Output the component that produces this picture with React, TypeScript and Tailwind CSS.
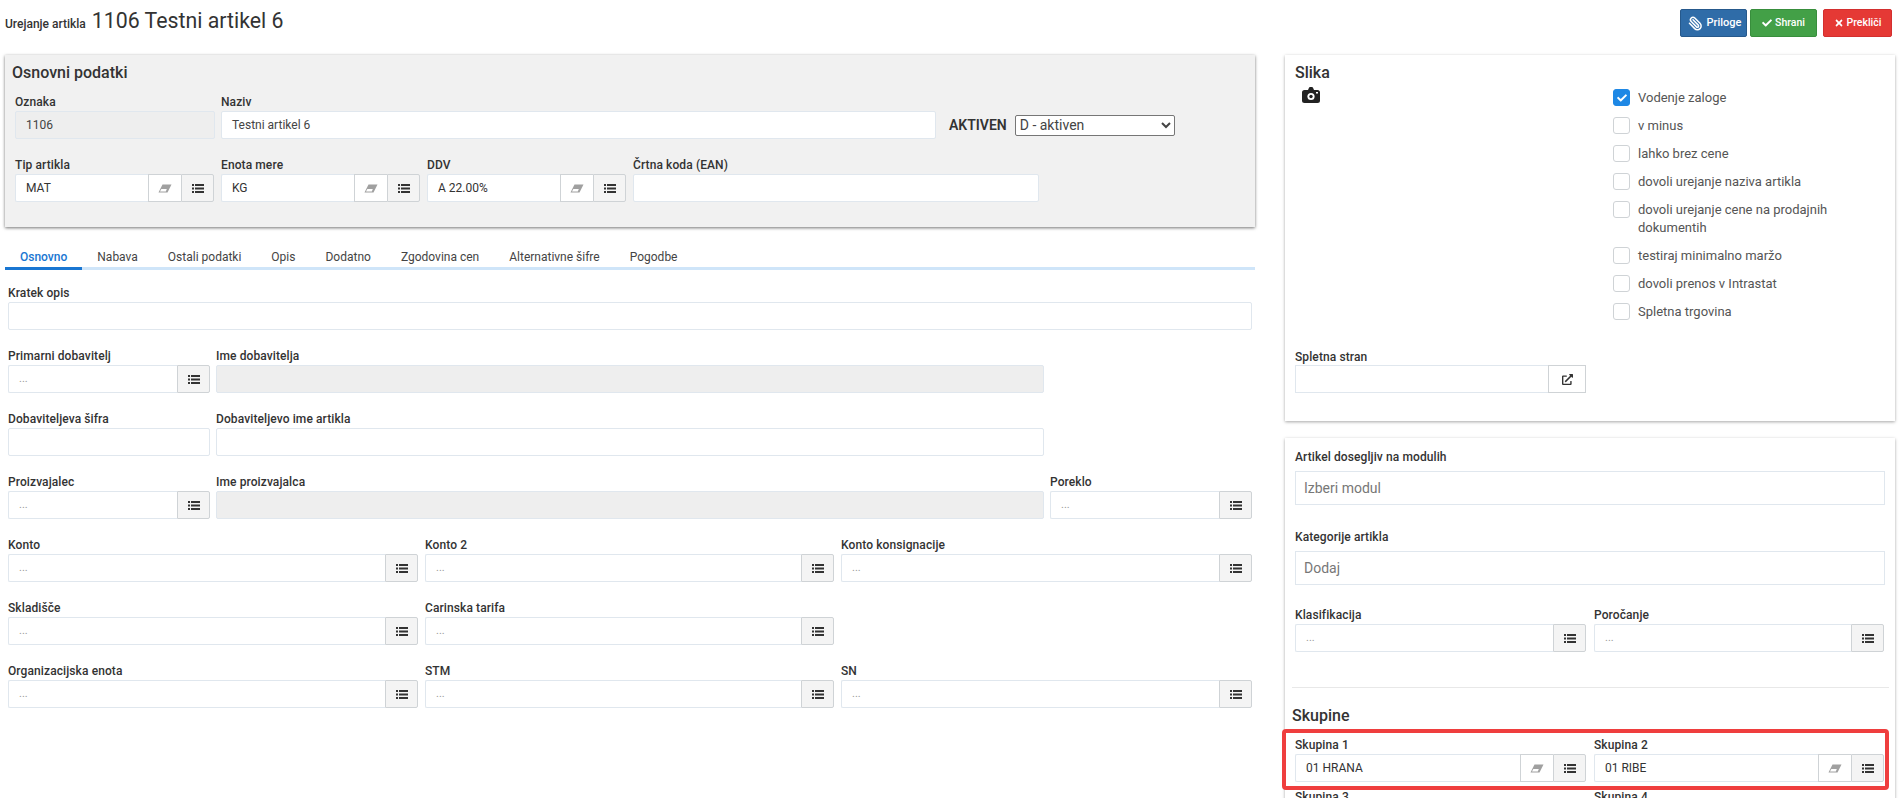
import React from "react";
import { FaCheck, FaTimes, FaExternalLinkAlt } from "react-icons/fa";
import { Paperclip } from "lucide-react";

const inputBorder = "border border-[#e0e7ee]";

function Label({ children }: { children: React.ReactNode }) {
  return <div className="h-[18px] text-[12px] leading-[18px] font-medium tracking-[0.1px] text-[#333] whitespace-nowrap">{children}</div>;
}

function Eraser() {
  return (
    <svg width="14" height="9" viewBox="0 0 14 9" aria-hidden="true">
      <polygon points="4.5,0.5 13.5,0.5 9.5,8.5 0.5,8.5" fill="#a0a0a0" />
      <polygon points="2,7.6 3.3,5 8.8,5 7.8,7.6" fill="#ffffff" />
    </svg>
  );
}

function ListIcon() {
  return (
    <svg width="12" height="9" viewBox="0 0 12 9" aria-hidden="true" fill="#333333">
      <rect x="0" y="0" width="2" height="2" />
      <rect x="3" y="0" width="9" height="2" />
      <rect x="0" y="3.5" width="2" height="2" />
      <rect x="3" y="3.5" width="9" height="2" />
      <rect x="0" y="7" width="2" height="2" />
      <rect x="3" y="7" width="9" height="2" />
    </svg>
  );
}

function Camera() {
  return (
    <svg width="18" height="16" viewBox="0 0 18 16" aria-hidden="true">
      <path d="M6 3 L7 0.8 Q7.3 0 8 0 H10 Q10.7 0 11 0.8 L12 3 H15.5 Q18 3 18 5.5 V13.5 Q18 16 15.5 16 H2.5 Q0 16 0 13.5 V5.5 Q0 3 2.5 3 Z" fill="#222222" />
      <circle cx="9" cy="9.5" r="3.6" fill="#ffffff" />
      <circle cx="9" cy="9.5" r="1.7" fill="#222222" />
      <rect x="14" y="5" width="2" height="1.5" fill="#ffffff" />
    </svg>
  );
}

function Box({ value, disabled }: { value?: string; disabled?: boolean }) {
  return (
    <div
      className={`flex-1 min-w-0 h-[28px] ${inputBorder} rounded-[2px] flex items-center px-[10px] text-[12px] whitespace-nowrap overflow-hidden ${disabled ? "bg-[#eeeeee]" : "bg-white"}`}
    >
      {value ? <span className="text-[#444]">{value}</span> : null}
    </div>
  );
}

function Lookup({ value, eraser }: { value?: string; eraser?: boolean }) {
  return (
    <div className="flex h-[28px] w-full">
      <div className={`flex-1 min-w-0 ${inputBorder} border-r-0 rounded-l-[2px] bg-white flex items-center px-[10px] text-[12px] whitespace-nowrap overflow-hidden`}>
        {value ? <span className="text-[#333]">{value}</span> : <span className="text-[#999] text-[11px]">...</span>}
      </div>
      {eraser && (
        <div className="w-[33px] shrink-0 bg-white border border-[#cfd3d6] border-r-0 flex items-center justify-center">
          <Eraser />
        </div>
      )}
      <div className="w-[33px] shrink-0 bg-[#f4f4f4] border border-[#cfd3d6] rounded-r-[2px] flex items-center justify-center">
        <ListIcon />
      </div>
    </div>
  );
}

function Field({ label, className, children }: { label: string; className?: string; children: React.ReactNode }) {
  return (
    <div className={className}>
      <Label>{label}</Label>
      <div className="flex">{children}</div>
    </div>
  );
}

function Check({ label, checked }: { label: React.ReactNode; checked?: boolean }) {
  return (
    <div className="flex gap-[8px] mb-[10px]">
      <div className={`w-[17px] h-[17px] shrink-0 rounded-[3px] border flex items-center justify-center ${checked ? "bg-[#1e88e5] border-[#1e88e5]" : "bg-white border-[#cfd3d6]"}`}>
        {checked && <FaCheck className="text-[10px] text-white" />}
      </div>
      <div className="text-[13px] leading-[18px] text-[#555]">{label}</div>
    </div>
  );
}

const tabs = ["Osnovno", "Nabava", "Ostali podatki", "Opis", "Dodatno", "Zgodovina cen", "Alternativne šifre", "Pogodbe"];

export default function App() {
  return (
    <div className="relative h-[798px] overflow-hidden bg-white font-['Roboto',sans-serif] text-[#333]">
      {/* header */}
      <div className="flex items-start justify-between h-[55px] pl-[5px] pr-[7px]">
        <div className="flex items-baseline gap-[6px] pt-[7px]">
          <span className="text-[12px] font-medium text-[#333]">Urejanje artikla</span>
          <span className="text-[21.3px] leading-[28px] text-[#333]">1106 Testni artikel 6</span>
        </div>
        <div className="flex pt-[9px]">
          <div className="w-[67px] h-[28px] rounded-[2px] bg-[#2f6ca8] border border-[#26598c] text-white text-[11px] font-medium flex items-center justify-center gap-[4px] pl-[2px]">
            <Paperclip size={15} strokeWidth={2.4} className="-scale-x-100" />
            <span className="pt-[1px]">Priloge</span>
          </div>
          <div className="ml-[3px] w-[67px] h-[28px] rounded-[2px] bg-[#43a047] border border-[#388e3c] text-white text-[10.5px] font-medium flex items-center justify-center gap-[3px]">
            <FaCheck className="text-[10px]" />Shrani
          </div>
          <div className="ml-[6px] w-[69px] h-[28px] rounded-[2px] bg-[#e53935] border border-[#d32f2f] text-white text-[10.5px] font-medium flex items-center justify-center gap-[3px]">
            <FaTimes className="text-[10px]" />Prekliči
          </div>
        </div>
      </div>

      <div className="flex items-start pl-[5px]">
        {/* left column */}
        <div className="w-[1250px] shrink-0">
          <div className="h-[172px] bg-[#f1f1f1] shadow-[0_1px_3px_rgba(0,0,0,0.55)] pt-[8px] px-[10px]">
            <div className="-ml-[3px] text-[16px] leading-[20px] font-medium text-[#333]">Osnovni podatki</div>
            <div className="flex gap-[6px] mt-[10px]">
              <Field label="Oznaka" className="w-[200px]"><Box value="1106" disabled /></Field>
              <Field label="Naziv" className="w-[715px]"><Box value="Testni artikel 6" /></Field>
              <div className="flex items-center ml-[7px] pt-[18px]">
                <span className="text-[14px] font-semibold text-[#333]">AKTIVEN</span>
                <select className="ml-[8px] w-[160px] h-[21px] rounded-[2px] border border-[#767676] bg-white text-[14px] text-[#444]" defaultValue="D">
                  <option value="D">D - aktiven</option>
                </select>
              </div>
            </div>
            <div className="flex gap-[7px] mt-[17px]">
              <Field label="Tip artikla" className="w-[199px]"><Lookup value="MAT" eraser /></Field>
              <Field label="Enota mere" className="w-[199px]"><Lookup value="KG" eraser /></Field>
              <Field label="DDV" className="w-[199px]"><Lookup value="A 22.00%" eraser /></Field>
              <Field label="Črtna koda (EAN)" className="w-[406px]"><Box /></Field>
            </div>
          </div>

          {/* tabs */}
          <div className="mt-[17px] flex h-[26px] border-b-[3px] border-[#cfe5f9]">
            {tabs.map((t, i) => (
              <div
                key={t}
                className={`px-[15px] pt-[3px] text-[12px] leading-[20px] whitespace-nowrap h-[26px] ${i === 0 ? "font-medium text-[#1976d2] border-b-[3px] border-[#1976d2]" : "text-[#444]"}`}
              >
                {t}
              </div>
            ))}
          </div>

          {/* form */}
          <div className="pl-[3px] pr-[3px] pt-[14px]">
            <Field label="Kratek opis"><Box /></Field>
            <div className="flex gap-[6px] mt-[17px]">
              <Field label="Primarni dobavitelj" className="w-[202px]"><Lookup /></Field>
              <Field label="Ime dobavitelja" className="w-[828px]"><Box disabled /></Field>
            </div>
            <div className="flex gap-[6px] mt-[17px]">
              <Field label="Dobaviteljeva šifra" className="w-[202px]"><Box /></Field>
              <Field label="Dobaviteljevo ime artikla" className="w-[828px]"><Box /></Field>
            </div>
            <div className="flex gap-[6px] mt-[17px]">
              <Field label="Proizvajalec" className="w-[202px]"><Lookup /></Field>
              <Field label="Ime proizvajalca" className="w-[828px]"><Box disabled /></Field>
              <Field label="Poreklo" className="w-[202px]"><Lookup /></Field>
            </div>
            <div className="flex gap-[7px] mt-[17px]">
              <Field label="Konto" className="w-[410px]"><Lookup /></Field>
              <Field label="Konto 2" className="w-[409px]"><Lookup /></Field>
              <Field label="Konto konsignacije" className="w-[411px]"><Lookup /></Field>
            </div>
            <div className="flex gap-[7px] mt-[17px]">
              <Field label="Skladišče" className="w-[410px]"><Lookup /></Field>
              <Field label="Carinska tarifa" className="w-[409px]"><Lookup /></Field>
            </div>
            <div className="flex gap-[7px] mt-[17px]">
              <Field label="Organizacijska enota" className="w-[410px]"><Lookup /></Field>
              <Field label="STM" className="w-[409px]"><Lookup /></Field>
              <Field label="SN" className="w-[411px]"><Lookup /></Field>
            </div>
          </div>
        </div>

        {/* right column */}
        <div className="ml-[30px] w-[610px] shrink-0">
          <div className="h-[366px] bg-white shadow-[0_1px_3px_rgba(0,0,0,0.35)] pt-[8px] px-[10px]">
            <div className="text-[16px] leading-[20px] font-medium text-[#333]">Slika</div>
            <div className="flex">
              <div className="w-[318px] shrink-0 pl-[7px] pt-[4px]">
                <Camera />
              </div>
              <div className="w-[270px] pt-[6px]">
                <Check label="Vodenje zaloge" checked />
                <Check label="v minus" />
                <Check label="lahko brez cene" />
                <Check label="dovoli urejanje naziva artikla" />
                <Check label={<>dovoli urejanje cene na prodajnih<br />dokumentih</>} />
                <Check label="testiraj minimalno maržo" />
                <Check label="dovoli prenos v Intrastat" />
                <Check label="Spletna trgovina" />
              </div>
            </div>
            <div className="mt-[17px] w-[291px]">
              <div className="-mb-[1px]"><Label>Spletna stran</Label></div>
              <div className="flex h-[28px]">
                <div className={`flex-1 ${inputBorder} border-r-0 bg-white`} />
                <div className="w-[38px] border border-[#cfd3d6] bg-white flex items-center justify-center">
                  <FaExternalLinkAlt className="text-[11px] text-[#333]" />
                </div>
              </div>
            </div>
          </div>

          <div className="mt-[17px] h-[400px] bg-white shadow-[0_1px_3px_rgba(0,0,0,0.35)] pt-[10px] px-[10px]">
            <Label>Artikel dosegljiv na modulih</Label>
            <div className={`mt-[5px] h-[34px] w-[590px] ${inputBorder} flex items-center px-[8px] text-[14px] text-[#777]`}>Izberi modul</div>
            <div className="mt-[23px]"><Label>Kategorije artikla</Label></div>
            <div className={`mt-[5px] h-[34px] w-[590px] ${inputBorder} flex items-center px-[8px] text-[14px] text-[#777]`}>Dodaj</div>
            <div className="flex gap-[8px] mt-[21px]">
              <Field label="Klasifikacija" className="w-[291px]"><Lookup /></Field>
              <Field label="Poročanje" className="w-[290px]"><Lookup /></Field>
            </div>
            <div className="-ml-[3px] w-[597px] mt-[35px] border-t border-[#e8e8e8]" />
            <div className="-ml-[3px] mt-[18px] text-[16px] leading-[20px] font-medium text-[#333]">Skupine</div>
            <div className="flex gap-[8px] mt-[10px]">
              <Field label="Skupina 1" className="w-[291px]"><Lookup value="01 HRANA" eraser /></Field>
              <Field label="Skupina 2" className="w-[290px]"><Lookup value="01 RIBE" eraser /></Field>
            </div>
            <div className="flex gap-[8px] mt-[6px]">
              <Field label="Skupina 3" className="w-[291px]"><Lookup /></Field>
              <Field label="Skupina 4" className="w-[290px]"><Lookup /></Field>
            </div>
          </div>
        </div>
      </div>

      {/* red annotation */}
      <div className="absolute left-[1282px] top-[729px] w-[607px] h-[61px] border-[4px] border-[#ef3e3e] rounded-[4px]" />
    </div>
  );
}
